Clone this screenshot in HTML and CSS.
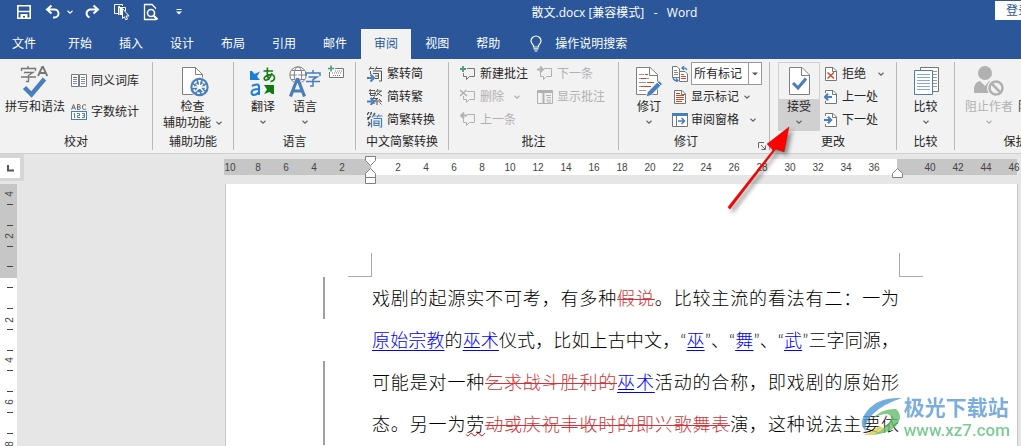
FILE: index.html
```html
<!DOCTYPE html>
<html lang="zh-CN">
<head>
<meta charset="utf-8">
<title>散文.docx [兼容模式] - Word</title>
<link rel="stylesheet" href="styles.css">
</head>
<body>
<svg class="defs" aria-hidden="true">
  <symbol id="chev" viewBox="0 0 6 4"><path d="M.5 .7L3 3.1L5.500 .7" fill="none" stroke="currentColor" stroke-width="1.200"/></symbol>
  <symbol id="bubble" viewBox="0 0 16 16"><path d="M7 2.500H14.500V10.500H9.500L6.500 13.500V10.500H3.500V7" fill="none" stroke="currentColor"/></symbol>
  <symbol id="sheet" viewBox="0 0 14 16"><path d="M1.500 1.500H9L12.500 5V14.500H1.500Z" fill="#fff" stroke="#767676"/><path d="M8.500 1.500V5.500H12.500" fill="none" stroke="#767676"/></symbol>
</svg>

<header class="top">
  <div class="titlebar">
    <div class="quick">
      <button aria-label="保存"><svg width="16" height="16" viewBox="0 0 16 16"><path d="M1.800 1.800H14.200V14.200H1.800Z" fill="none" stroke="#fff" stroke-width="1.600"/><path d="M2 7.500H14" fill="none" stroke="#fff" stroke-width="1.500"/><path d="M4.500 10H11.500V14H9V12H7V14H4.500Z" fill="#fff"/></svg></button>
      <button class="undo" aria-label="撤消"><svg width="16" height="16" viewBox="0 0 16 16"><path d="M6.500 1.500L2 5.500L6.500 9.500M2.500 5.500H9.500A4 4 0 0 1 9.500 13.500H8" fill="none" stroke="#fff" stroke-width="2"/></svg><svg class="chev" width="6" height="4"><use href="#chev"/></svg></button>
      <button class="redo" aria-label="恢复"><svg width="16" height="16" viewBox="0 0 16 16"><path d="M9.500 1.500L14 5.500L9.500 9.500M13.500 5.500H6A4 4 0 0 0 4 12.500L5.500 13.500" fill="none" stroke="#fff" stroke-width="2"/></svg></button>
      <button class="touch" aria-label="触摸/鼠标模式"><svg width="18" height="18" viewBox="0 0 18 18"><path d="M5.500 10.500H1.500V1.500H9.500V3M7 3.500H5.500V12" fill="none" stroke="#fff"/><path d="M5.500 4.500H12.500V8" fill="none" stroke="#fff"/><path d="M9.500 5.500L16 13H13L14.500 16L12.800 16.800L11.300 13.800L9.500 15.500Z" fill="#2b579a" stroke="#fff"/><path d="M6.500 5H9V12H6.500Z" fill="#fff"/></svg></button>
      <button class="preview" aria-label="打印预览"><svg width="16" height="18" viewBox="0 0 16 18"><path d="M12.500 14V16.500H1.500V1.500H9L12.500 5V6" fill="none" stroke="#fff" stroke-width="1.300"/><circle cx="8" cy="10" r="3.500" fill="none" stroke="#fff" stroke-width="1.600"/><path d="M10.500 12.500L14.500 16.500" stroke="#fff" stroke-width="2"/></svg></button>
      <button class="custom" aria-label="自定义快速访问工具栏"><svg width="6" height="6" viewBox="0 0 6 6"><path d="M.5 .5H5.500" stroke="#fff"/><path d="M0 2.500H6L3 5.500Z" fill="#fff"/></svg></button>
    </div>
    <div class="title">散文.docx [兼容模式]&nbsp;&nbsp; -&nbsp;&nbsp; Word</div>
    <button class="login">登录</button>
  </div>
  <nav class="tabs">
    <button class="file">文件</button>
    <button>开始</button>
    <button>插入</button>
    <button>设计</button>
    <button>布局</button>
    <button>引用</button>
    <button>邮件</button>
    <button class="active">审阅</button>
    <button>视图</button>
    <button>帮助</button>
    <button class="tell"><svg width="12" height="18" viewBox="0 0 12 18"><path d="M3.500 12V10.500C2 9 1 7.800 1 6A5 5 0 0 1 11 6C11 7.800 10 9 8.500 10.500V12Z" fill="none" stroke="#fff" stroke-width="1.200"/><path d="M3.500 13.800H8.500M4.500 16H7.500" stroke="#fff" stroke-width="1.200"/></svg>操作说明搜索</button>
  </nav>
</header>

<main>
<div class="ribbon">
  <section class="group proof">
    <div class="body">
      <button class="big"><svg width="32" height="32" viewBox="0 0 32 32"><path d="M9 0V2M2.500 5V2.500H16.500V5M5 6.500H14L9.500 9.500V15.500H7M2 11H17" fill="none" stroke="#767676" stroke-width="1.300"/><path d="M19 10L23.200 1H24L28.300 10M20.500 7H27" fill="none" stroke="#767676" stroke-width="1.800"/><path d="M5.500 21.500L12.500 28.500L25.500 13" fill="none" stroke="#4a7ebb" stroke-width="4.500"/></svg><span>拼写和语法</span></button>
      <div class="col wide">
        <button class="small"><svg width="16" height="16" viewBox="0 0 16 16"><path d="M.5 1.500H7.500V13.500H.5ZM8.500 1.500H15.500V13.500H8.500Z" fill="#fff" stroke="#6b7f96"/><path d="M2 4.500H6" stroke="#d24726"/><path d="M2 6.500H6M2 8.500H6M2 10.500H6M10 4.500H14M10 6.500H14M10 8.500H14M10 10.500H14" stroke="#8c8c8c"/></svg>同义词库</button>
        <button class="small"><svg width="16" height="18" viewBox="0 0 16 18"><path d="M.6 6.500L2.500 1.500L4.500 6.500M1.200 5H4M6.500 1.500H8.500Q10 2.500 8.500 4Q10.500 5 8.500 6.500H6.500ZM6.500 4H8.500M15 2.200Q11.500 .5 11.500 4Q11.500 7.500 15 6" fill="none" stroke="#666"/><rect x=".5" y="8.500" width="15" height="8" fill="#fff" stroke="#4a7ebb"/><path d="M2.500 11L3.500 10.500V15M6 10.500H8.500V12.500H6.500V14.500H9M11 10.500H13.500V14.500H11M11.500 12.500H13" fill="none" stroke="#4a7ebb"/></svg>字数统计</button>
      </div>
    </div>
    <h2>校对</h2>
  </section>
  <section class="group access">
    <div class="body">
      <button class="big"><svg width="32" height="32" viewBox="0 0 32 32"><path d="M5.500 1.500H18.500L25.500 8.500V28.500H5.500Z" fill="#fff" stroke="#808080"/><path d="M18.500 1.500V8.500H25.500" fill="none" stroke="#808080"/><circle cx="22.500" cy="21" r="10" fill="#f2f2f2"/><circle cx="22.500" cy="21" r="9.200" fill="#4a7ebb"/><circle cx="22.500" cy="21" r="6.200" fill="none" stroke="#fff" stroke-width="1.500" stroke-dasharray="3 1.500"/><path d="M22.500 14V21M19 18L22.500 21L26 18M22.500 21L19 25M22.500 21L26 25M17 21H28" stroke="#fff" stroke-width="1.400" fill="none"/></svg><span>检查</span><span class="second">辅助功能<svg class="chev" width="6" height="4"><use href="#chev"/></svg></span></button>
    </div>
    <h2>辅助功能</h2>
  </section>
  <section class="group lang">
    <div class="body">
      <button class="big"><svg width="32" height="32" viewBox="0 0 32 32"><path d="M3 5H5L7.500 8L13 5.500L10 10.500L13 14H3Z" fill="#1a7fd6"/><path d="M5 20Q12 16.500 12 21V29M12 23Q4.500 23 4.500 26.500Q5 30 9 28.500L12 26" fill="none" stroke="#1a7fd6" stroke-width="2"/><path d="M16.500 5H26M20.500 1.500Q19.500 9 22 14M25 7Q22 15 18 14Q15.500 12 20 9.500Q27 7 27.500 11.500Q27.500 15 23.500 15.500" fill="none" stroke="#107c10" stroke-width="1.600"/><path d="M17 19H27V28H25L22.500 26L17 28L20 23.500Z" fill="#107c10"/></svg><span>翻译</span><span class="second"><svg class="chev" width="6" height="4"><use href="#chev"/></svg></span></button>
      <button class="big"><svg width="36" height="32" viewBox="0 0 36 32"><circle cx="11" cy="9" r="8.200" fill="#fff" stroke="#808080"/><ellipse cx="11" cy="9" rx="3.800" ry="8.200" fill="none" stroke="#808080"/><path d="M3 9H19M4.500 4.500H17.500M4.500 13.500H17.500" stroke="#808080"/><path d="M26 4V7M19 10V7H33V10M21.500 11H30L26 13.500V20H23M19 15.500H33" fill="none" stroke="#4a7ebb" stroke-width="1.500"/><path d="M3.500 30.500L10.500 13.500L17.500 30.500M5.500 25H16" fill="none" stroke="#f2f2f2" stroke-width="5"/><path d="M3.500 30.500L10 13.500H11L17.500 30.500M6 25H15" fill="none" stroke="#4a7ebb" stroke-width="3.200"/></svg><span>语言</span><span class="second"><svg class="chev" width="6" height="4"><use href="#chev"/></svg></span></button>
      <button class="small keyboard" aria-label="更新输入法词典"><svg width="16" height="14" viewBox="0 0 16 14"><path d="M7 3.500H15.500V12.500H1.500V7" fill="#fff" stroke="#767676"/><path d="M3 .5V6.500M0 3.500H6" stroke="#4e9a7e" stroke-width="1.600"/><path d="M4 8H13M7 6H14M5 10.500H12" stroke="#767676" stroke-dasharray="1 1"/></svg></button>
    </div>
    <h2>语言</h2>
  </section>
  <section class="group chinese">
    <div class="body">
      <div class="col">
        <button class="small"><svg width="16" height="16" viewBox="0 0 16 16"><path d="M4 .5L2 4M3 2.500H7M10 .5L8 4M9 2.500H15M3.500 5V8M6 5H14.500V15H12M6 7.500H11.500V12.500H8M8 10H11" fill="none" stroke="#555"/><path d="M0 12H5M3.500 8.500L7 12L3.500 15.500" fill="none" stroke="#4a7ebb" stroke-width="2"/></svg>繁转简</button>
        <button class="small"><svg width="16" height="16" viewBox="0 0 16 16"><path d="M3.500 0L2 2.500M3 1.500H8M2 4.500H9M3.500 2.500V6.500H8V2.500M11 0L9 3M10 2H15M14 2L9 7M10 4L15 7M8 7.500L5.500 9.500H11L7 12H14M12 10L15 13M10 12V16M8 13.500L6.500 15M12.500 13.500L14.500 15.500" fill="none" stroke="#555"/><path d="M0 12.500H5M3.500 9L7 12.500L3.500 16" fill="none" stroke="#4a7ebb" stroke-width="2"/></svg>简转繁</button>
        <button class="small"><svg width="16" height="16" viewBox="0 0 16 16"><path d="M2 0L0 3M4.500 0L3.500 3M8 1L6.500 3M1 5V8M3.500 4L1 7M1 10L3 11.500L1 14" fill="none" stroke="#444" stroke-width="1.300"/><path d="M7 2.500L5 5.500M6 4H9.500M12 2.500L10 5.500M11 4H15.500M4.500 7V15.500M6.500 6.500H14.500V15H12.500M7 9H12V13.500H7ZM7 11.300H12" fill="none" stroke="#4a7ebb" stroke-width="1.200"/></svg>简繁转换</button>
      </div>
    </div>
    <h2>中文简繁转换</h2>
  </section>
  <section class="group comments">
    <div class="body">
      <div class="col">
        <button class="small"><svg class="gray" width="16" height="16" viewBox="0 0 16 16"><use href="#bubble"/><path d="M3 0V6M0 3H6" stroke="#4e9a7e" stroke-width="1.800"/></svg>新建批注</button>
        <button class="small" disabled><svg width="16" height="16" viewBox="0 0 16 16"><use href="#bubble"/><path d="M0 1L7 7M6.500 1L0 7" stroke="currentColor" stroke-width="1.500"/></svg>删除<svg class="chev" width="6" height="4"><use href="#chev"/></svg></button>
        <button class="small" disabled><svg width="16" height="16" viewBox="0 0 16 16"><use href="#bubble"/><path d="M1 3.500H7M4 .5L1 3.500L4 6.500" fill="none" stroke="currentColor" stroke-width="1.800"/></svg>上一条</button>
      </div>
      <div class="col">
        <button class="small" disabled><svg width="16" height="16" viewBox="0 0 16 16"><use href="#bubble"/><path d="M0 3.500H6M3 .5L6 3.500L3 6.500" fill="none" stroke="currentColor" stroke-width="1.800"/></svg>下一条</button>
        <button class="small" disabled><svg width="16" height="16" viewBox="0 0 16 16"><path d="M.5 1.500H15.500V14.500H.5Z" fill="none" stroke="currentColor"/><path d="M0 3H16M6.500 3V14" stroke="currentColor" stroke-width="2"/><path d="M9 6.500H14M10 8.500H14M9 11H14M10 13H14" stroke="currentColor"/></svg>显示批注</button>
      </div>
    </div>
    <h2>批注</h2>
  </section>
  <section class="group track">
    <div class="body">
      <button class="big"><svg width="32" height="32" viewBox="0 0 32 32"><path d="M3.500 1.500H17L24.500 8.500V28.500H3.500Z" fill="#fff" stroke="#808080"/><path d="M16.500 1.500V9.500H24.500" fill="none" stroke="#808080"/><path d="M6 8.500H11M6 12.500H8M13 12.500H16M6 16.500H13M6 20.500H8M6 24.500H13" stroke="#999"/><path d="M12 8.500H15M8 12.500H13M14 16.500H21M8 20.500H18" stroke="#d24726"/><path d="M13 31L14.500 26L26 14.500L29.500 18L18 29.500Z" fill="#4a7ebb" stroke="#f2f2f2"/><path d="M24 16L27.500 19.500" stroke="#fff"/></svg><span>修订</span><span class="second"><svg class="chev" width="6" height="4"><use href="#chev"/></svg></span></button>
      <div class="col">
        <div class="row"><svg width="16" height="16" viewBox="0 0 16 16"><path d="M.5 .5H5L7.500 3V11.500H.5Z" fill="#fff" stroke="#767676"/><path d="M2 4.500H5M2 6.500H6M2 8.500H6" stroke="#888"/><path d="M7.500 5.500H13L15.500 8V15.500H7.500Z" fill="#fff" stroke="#767676"/><path d="M9 8.500H12M9 10.500H14M9 12.500H14" stroke="#d24726"/><path d="M15 4Q14 1.500 10 2M12 0L10 2L12 4M1 12Q2 15 5 14.500M4 12.500L6 14.500L4 16" fill="none" stroke="#4a7ebb" stroke-width="1.300"/></svg>
          <div class="combo"><select aria-label="显示以供审阅"><option>所有标记</option></select><span class="arrow"><svg width="6" height="4" viewBox="0 0 6 4"><path d="M0 .5H6L3 3.500Z" fill="#555"/></svg></span></div></div>
        <button class="small"><svg width="16" height="16" viewBox="-1 0 16 16"><use href="#sheet" width="14" height="16"/><path d="M3 4.500H7M3 6.500H11M3 8.500H11M3 10.500H11M3 12.500H9" stroke="#d24726"/></svg>显示标记<svg class="chev near" width="6" height="4"><use href="#chev"/></svg></button>
        <button class="small"><svg width="16" height="16" viewBox="0 0 16 16"><path d="M.5 1.500H15.500V14.500H.5Z" fill="#fff" stroke="#767676"/><path d="M0 2.500H16" stroke="#4a7ebb" stroke-width="3"/><path d="M4.500 4V14" stroke="#767676"/><path d="M6 9H12M9.500 6L12.500 9L9.500 12" fill="none" stroke="#4a7ebb" stroke-width="1.600"/></svg>审阅窗格<svg class="chev far" width="6" height="4"><use href="#chev"/></svg></button>
      </div>
    </div>
    <h2>修订</h2>
    <button class="launcher" aria-label="修订选项"><svg width="8" height="8" viewBox="0 0 8 8"><path d="M.5 6V.5H6M3 3L7 7M7.500 3.500V7.500H3.500" fill="none" stroke="#666"/></svg></button>
  </section>
  <section class="group change">
    <div class="body">
      <button class="big accept"><svg width="32" height="32" viewBox="0 0 32 32"><path d="M6.500 1.500H19L26.500 9V28.500H6.500Z" fill="#fff" stroke="#808080"/><path d="M18.500 1.500V9.500H26.500" fill="none" stroke="#808080"/><path d="M10 17L15 22L23 12.500" fill="none" stroke="#4a7ebb" stroke-width="3"/></svg><span>接受</span><span class="second"><svg class="chev" width="6" height="4"><use href="#chev"/></svg></span></button>
      <div class="col">
        <button class="small"><svg width="14" height="16" viewBox="0 0 14 16"><use href="#sheet" width="14" height="16"/><path d="M3.500 6.500L10 12.500M10 6.500L3.500 12.500" stroke="#d24726" stroke-width="1.500"/></svg>拒绝<svg class="chev far" width="6" height="4"><use href="#chev"/></svg></button>
        <button class="small"><svg width="14" height="16" viewBox="0 0 14 16"><use href="#sheet" width="14" height="16"/><path d="M0 4H6V12H0Z" fill="#f2f2f2"/><path d="M1 8H8M4 4.800L1 8L4 11.200" fill="none" stroke="#4a7ebb" stroke-width="2"/></svg>上一处</button>
        <button class="small"><svg width="14" height="16" viewBox="0 0 14 16"><use href="#sheet" width="14" height="16"/><path d="M0 4H6V12H0Z" fill="#f2f2f2"/><path d="M0 8H7M4 4.800L7.200 8L4 11.200" fill="none" stroke="#4a7ebb" stroke-width="2"/></svg>下一处</button>
      </div>
    </div>
    <h2>更改</h2>
  </section>
  <section class="group compare">
    <div class="body">
      <button class="big"><svg width="32" height="32" viewBox="0 0 32 32"><path d="M10.500 1.500H28.500V25.500H10.500Z" fill="#fff" stroke="#767676"/><path d="M22 5.500H27M22 8.500H27M22 11.500H27M22 14.500H27M22 17.500H27M22 20.500H27" stroke="#999"/><path d="M4.500 4.500H22.500V28.500H4.500Z" fill="#fff" stroke="#4a7ebb"/><path d="M7 8.500H20M7 11.500H20M7 14.500H20M7 17.500H20M7 20.500H20M7 23.500H20" stroke="#86a9d4"/></svg><span>比较</span><span class="second"><svg class="chev" width="6" height="4"><use href="#chev"/></svg></span></button>
    </div>
    <h2>比较</h2>
  </section>
  <section class="group protect">
    <div class="body">
      <button class="big" disabled><svg width="32" height="32" viewBox="0 0 32 32"><circle cx="12" cy="7" r="7" fill="#b1b1b1"/><path d="M1 27V22Q2 16 7 15L12 20L16 15Q20 16 21 21V27Z" fill="#b1b1b1"/><circle cx="23" cy="22" r="9" fill="#f2f2f2"/><circle cx="23" cy="22" r="6.500" fill="none" stroke="#b1b1b1" stroke-width="2.500"/><path d="M18.500 17.500L27.500 26.500" stroke="#b1b1b1" stroke-width="2.500"/></svg><span>阻止作者</span><span class="second"><svg class="chev" width="6" height="4"><use href="#chev"/></svg></span></button>
      <button class="big restrict"><svg width="32" height="32" viewBox="0 0 32 32"><path d="M8.500 1.500H24.500V28.500H8.500Z" fill="#fff" stroke="#808080"/></svg><span>限制编辑</span></button>
    </div>
    <h2>保护</h2>
  </section>
</div>

<div class="rulerbar">
  <div class="corner"><button class="tabstop" aria-label="制表符"><svg width="7" height="7" viewBox="0 0 7 7"><path d="M1 0V5.500H7" fill="none" stroke="#555" stroke-width="2"/></svg></button></div>
  <div class="hruler">
    <div class="zone left"><span>10</span><span>8</span><span>6</span><span>4</span><span>2</span></div>
    <div class="zone text"><span>2</span><span>4</span><span>6</span><span>8</span><span>10</span><span>12</span><span>14</span><span>16</span><span>18</span><span>20</span><span>22</span><span>24</span><span>26</span><span>28</span><span>30</span><span>32</span><span>34</span><span>36</span>
      <svg class="indent" width="11" height="28" viewBox="0 0 11 28"><path d="M.5 .5H10.500V4.500L5.500 9.500L.5 4.500ZM5.500 12.500L10.500 17.500V27.500H.5V17.500ZM.5 21.500H10.500" fill="#fff" stroke="#808080"/></svg>
      <svg class="indent end" width="11" height="10" viewBox="0 0 11 10"><path d="M5.500 .5L10.500 5.500V9.500H.5V5.500Z" fill="#fff" stroke="#808080"/></svg>
    </div>
    <div class="zone right"><span>40</span><span>42</span><span>44</span><span>46</span></div>
  </div>
</div>

<div class="workspace">
  <svg class="vruler" width="17" height="262" viewBox="0 0 17 262">
    <rect width="17" height="262" fill="#fff"/><rect width="17" height="94" fill="#c6c6c6"/>
    <path d="M7 20.500H13M7 41.500H13M7 62.500H13M7 82.500H13M7 103.500H13M7 124.500H13M7 145.500H13M7 166.500H13M7 186.500H13M7 207.500H13M7 228.500H13M7 249.500H13" stroke="#444"/>
    <g><text transform="translate(13 10) rotate(-90)">4</text><text transform="translate(13 52) rotate(-90)">2</text><text transform="translate(13 136) rotate(-90)">2</text><text transform="translate(13 176) rotate(-90)">4</text><text transform="translate(13 218) rotate(-90)">6</text><text transform="translate(13 260) rotate(-90)">8</text></g>
  </svg>
  <article class="page">
    <div class="crops"><i></i><i class="end"></i></div>
    <p class="changed">戏剧的起源实不可考，有多种<del>假说</del>。比较主流的看法有二：一为</p>
    <p><ins>原始宗教</ins>的<ins>巫术</ins>仪式，比如上古中文，“<ins>巫</ins>”、“<ins>舞</ins>”、“<ins>武</ins>”三字同源，</p>
    <p class="changed">可能是对一种<del>乞求战斗胜利的</del><ins>巫术</ins>活动的合称，即戏剧的原始形</p>
    <p class="changed">态。另一为<span class="typo">劳</span><del>动或庆祝丰收时的即兴歌舞表</del>演，这种说法主要依</p>
  </article>
</div>
</main>

<svg class="pointer" width="72" height="92" viewBox="0 0 72 92" aria-hidden="true"><path d="M4 81L49 24L43 18L65 1L60 26L52 23L6 83Q5 83 4 81Z" fill="#f00" stroke="#b01010" stroke-width=".5"/></svg>
<div class="watermark">
  <svg width="44" height="42" viewBox="0 0 44 42"><path d="M42 2Q18 1 7 15Q-3 28 6 35Q4 27 13 18Q23 8 42 2Z" fill="#4e9ad6"/><path d="M12 23Q22 12 36 13Q44 20 36 30Q26 40 4 39Q22 36 29 27Q34 19 27 18Q20 18 12 23Z" fill="#66bd6b"/><path d="M4 39Q17 40 24 32L19 30Q12 36 4 39Z" fill="#d9cf4e"/></svg>
  <div><b>极光下载站</b><span>www.xz7.com</span></div>
</div>
</body>
</html>
```
FILE: styles.css
```css
* { box-sizing: border-box; }
body {
  margin: 0;
  min-height: 100vh;
  overflow: hidden;
  position: relative;
  background: #e6e6e6;
  color: #262626;
  font: 12px/16px "Open Sans", "Noto Sans CJK SC", sans-serif;
}
button {
  border: 0;
  padding: 0;
  background: none;
  color: inherit;
  font: inherit;
  white-space: nowrap;
}
svg { display: block; flex: none; }
.defs { position: absolute; width: 0; height: 0; }
.chev { color: #666; }

/* Title bar and tabs */
.top { background: #2b579a; color: #fff; overflow: hidden; }
.top .chev { color: #fff; }
.titlebar { display: flex; align-items: flex-start; height: 29px; }
.quick { display: flex; align-items: center; height: 24px; padding-left: 16px; }
.undo { display: flex; align-items: center; gap: 6px; margin-left: 13px; }
.redo { margin-left: 11px; }
.touch { margin-left: 13px; }
.preview { margin-left: 12px; }
.custom { margin-left: 17px; }
.title { flex: 1; padding-left: 52px; line-height: 26px; text-align: center; }
.login {
  height: 19px;
  margin: 1px -21px 0 0;
  padding: 0 12px 0 11px;
  background: #fff;
  color: #2b579a;
}
.tabs { display: flex; gap: 1px; height: 30px; }
.tabs button { padding: 0 13px; line-height: 30px; }
.tabs .file { padding: 0 12px; margin-right: 6px; }
.tabs .active { background: #f2f2f2; color: #2b579a; }
.tabs .tell { display: flex; align-items: center; gap: 13px; padding: 0 16px; line-height: 28px; }

/* Ribbon */
.ribbon {
  display: flex;
  padding: 3px 0;
  overflow: hidden;
  background: #f2f2f2;
  border-bottom: 1px solid #cfcfcf;
}
.group {
  flex: none;
  position: relative;
  border-right: 1px solid #b8b8b8;
}
.body { display: flex; height: 72px; }
.group h2 { margin: 0; font: inherit; text-align: center; }
.big {
  display: flex;
  flex-direction: column;
  align-items: center;
  height: 69px;
  padding-top: 4px;
}
.big span { line-height: 18px; }
.big .second { display: flex; align-items: center; gap: 5px; line-height: 14px; }
.col { display: flex; flex-direction: column; }
.small, .row { display: flex; align-items: center; gap: 4px; height: 23px; }
.small .chev { margin-left: 6px; }
.small .near { margin-left: 2px; }
.small .far { margin-left: 8px; }
.gray { color: #767676; }
button:disabled, button:disabled .chev { color: #b1b1b1; }

.proof { width: 153px; }
.proof .body { padding-left: 5px; gap: 6px; }
.proof .wide { gap: 8px; padding-top: 7px; }
.access { width: 81px; }
.access .body { padding-left: 10px; }
.lang { width: 122px; }
.lang .body { padding-left: 13px; gap: 8px; }
.lang .second, .track .second, .accept .second, .compare .second, .protect .second { height: 12px; }
.lang .keyboard { height: 20px; margin-left: -3px; }
.chinese { width: 93px; }
.chinese .body { padding-left: 11px; }
.comments { width: 170px; }
.comments .body { padding-left: 11px; gap: 9px; }
.track { width: 151px; }
.track .body { padding-left: 14px; gap: 7px; }
.track .row, .track .small { gap: 3px; }
.track h2 { padding-right: 16px; }
.launcher { position: absolute; right: 3px; bottom: 0; }
.combo { display: flex; width: 71px; height: 23px; border: 1px solid #999; background: #fff; }
.combo select {
  appearance: none;
  flex: 1;
  min-width: 0;
  padding: 0 0 0 2px;
  border: 0;
  background: none;
  color: inherit;
  font: inherit;
}
.arrow { display: flex; align-items: center; justify-content: center; width: 13px; border-left: 1px solid #999; }
.change { width: 127px; }
.change .body { padding-left: 8px; gap: 4px; }
.accept {
  width: 42px;
  border: 1px solid #d0d0d0;
  padding-top: 3px;
  background: linear-gradient(#f2f2f2 36px, #d0d0d0 36px);
}
.compare { width: 58px; }
.compare .body { justify-content: center; }
.protect { width: 122px; }
.protect .body { padding-left: 10px; gap: 5px; }

/* Rulers */
.rulerbar { display: flex; height: 30px; }
.corner { width: 24px; height: 27px; padding: 4px 4px 4px 0; background: #d6d6d6; }
.tabstop { display: flex; align-items: center; justify-content: center; width: 20px; height: 20px; background: #fff; }
.hruler {
  flex: 1;
  display: flex;
  height: 16px;
  margin: 5px 4px 0 200px;
  color: #444;
  font: 10px/17px "Liberation Sans", sans-serif;
}
.zone { display: flex; }
.zone span { flex: none; width: 28px; text-align: center; }
.zone.left { width: 147px; justify-content: flex-end; padding-right: 15px; background: #c6c6c6; }
.zone.text { flex: 1; position: relative; padding-left: 13px; background: #fff; }
.zone.right { width: 120px; padding-left: 19px; background: #c6c6c6; }
.indent { position: absolute; left: -6px; top: -3px; }
.indent.end { left: auto; right: -6px; top: 9px; }
.vruler text { font: 10px "Liberation Sans", sans-serif; fill: #444; text-anchor: middle; }

/* Document */
.workspace { display: flex; align-items: stretch; }
.page {
  flex: 1;
  min-height: 262px;
  margin: 0 3px 0 208px;
  padding: 69px 118px 0 146px;
  background: #fff;
  border: solid #c6c6c6;
  border-width: 0 1px;
  color: #000;
  font: 300 18px/42px Lato, "Noto Sans CJK SC", sans-serif;
}
.crops { display: flex; justify-content: space-between; margin: 0 -24px; }
.crops i { width: 24px; height: 24px; border: solid #aaa; border-width: 0 1px 1px 0; }
.crops .end { border-width: 0 0 1px 1px; }
.page p {
  position: relative;
  height: 42px;
  margin: 0;
  white-space: nowrap;
  text-align: justify;
  text-align-last: justify;
}
.changed::before {
  content: "";
  position: absolute;
  left: -49px;
  top: 0;
  bottom: 0;
  width: 2px;
  background: #a0a0a0;
}
.page del { color: #d13438; text-decoration: line-through 1px; }
.page ins { color: #00f; text-decoration: underline 1px; text-underline-offset: 3px; }
.typo { text-decoration: underline wavy #e00000 1px; }

/* Overlays */
.pointer {
  position: absolute;
  left: 724px;
  top: 126px;
  filter: drop-shadow(3px 3px 2px rgba(0, 0, 0, .45));
}
.watermark {
  position: absolute;
  right: 11px;
  top: 396px;
  display: flex;
  opacity: .8;
}
.watermark div { display: flex; flex-direction: column; }
.watermark b { color: #5b9bd5; font-size: 21px; line-height: 23px; }
.watermark span { color: #5cc07a; font: 500 17px/22px Roboto, sans-serif; }
```
